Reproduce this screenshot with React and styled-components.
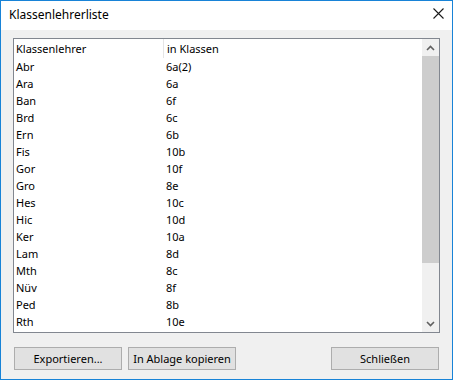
import styled, { createGlobalStyle } from 'styled-components'

const rows = [
    ['Abr', '6a(2)'], ['Ara', '6a'], ['Ban', '6f'], ['Brd', '6c'],
    ['Ern', '6b'], ['Fis', '10b'], ['Gor', '10f'], ['Gro', '8e'],
    ['Hes', '10c'], ['Hic', '10d'], ['Ker', '10a'], ['Lam', '8d'],
    ['Mth', '8c'], ['Nüv', '8f'], ['Ped', '8b'], ['Rth', '10e'],
];

export default function App () {
    return(
        <>
            <Global/>
            <Window>
                <TitleBar>
                    <Title>Klassenlehrerliste</Title>
                    <CloseButton aria-label="close">
                        <svg width="11" height="11" viewBox="0 0 11 11">
                            <path d="M0.5 0.5 L10.5 10.5 M10.5 0.5 L0.5 10.5" stroke="#1a1a1a" strokeWidth="1.1"/>
                        </svg>
                    </CloseButton>
                </TitleBar>
                <Body>
                    <ListBox>
                        <Table>
                            <HeaderRow>
                                <HeadCell>Klassenlehrer</HeadCell>
                                <HeadCell divider>in Klassen</HeadCell>
                            </HeaderRow>
                            {rows.map(r =>
                                <Row key={r[0]}>
                                    <Cell>{r[0]}</Cell>
                                    <Cell second>{r[1]}</Cell>
                                </Row>
                            )}
                        </Table>
                        <ScrollBar>
                            <Arrow>
                                <svg width="9" height="6" viewBox="0 0 9 6">
                                    <path d="M1 5 L4.5 1.5 L8 5" fill="none" stroke="#606060" strokeWidth="1.6"/>
                                </svg>
                            </Arrow>
                            <Track>
                                <Thumb/>
                            </Track>
                            <Arrow>
                                <svg width="9" height="6" viewBox="0 0 9 6">
                                    <path d="M1 1 L4.5 4.5 L8 1" fill="none" stroke="#606060" strokeWidth="1.6"/>
                                </svg>
                            </Arrow>
                        </ScrollBar>
                    </ListBox>
                    <ButtonRow>
                        <Button>Exportieren...</Button>
                        <Button>In Ablage kopieren</Button>
                        <Spacer/>
                        <Button>Schließen</Button>
                    </ButtonRow>
                </Body>
            </Window>
        </>
    )
};

//styles______________________________________________
const Global = createGlobalStyle`
    body {
        margin: 0;
        background: #ffffff;
        font-family: "Noto Sans", "Open Sans", sans-serif;
        font-size: 11px;
        color: #000;
    }
`;
const Window = styled.div`
    width: 453px;
    height: 380px;
    box-sizing: border-box;
    border: 1px solid #1883d7;
    background: #f0f0f0;
    display: flex;
    flex-direction: column;
`;
const TitleBar = styled.div`
    height: 29px;
    background: #ffffff;
    display: flex;
    align-items: center;
    justify-content: space-between;
    padding: 0 8px 0 8px;
`;
const Title = styled.div`
    font-size: 12px;
    margin-top: -2px;
`;
const CloseButton = styled.div`
    display: flex;
    margin-top: -4px;
    margin-right: 0px;
`;
const Body = styled.div`
    flex: 1;
    padding: 8px 12px 0 12px;
    display: flex;
    flex-direction: column;
`;
const ListBox = styled.div`
    height: 295px;
    box-sizing: border-box;
    border: 1px solid #828790;
    background: #ffffff;
    display: flex;
`;
const Table = styled.div`
    flex: 1;
    overflow: hidden;
`;
const HeaderRow = styled.div`
    height: 19px;
    display: grid;
    grid-template-columns: 149px 1fr;
    align-items: center;
`;
const HeadCell = styled.div`
    height: 100%;
    display: flex;
    align-items: center;
    padding-left: ${p => p.divider ? '3px' : '2px'};
    border-left: ${p => p.divider ? '1px solid #e5e5e5' : 'none'};
`;
const Row = styled.div`
    height: 17px;
    display: grid;
    grid-template-columns: 149px 1fr;
    align-items: center;
`;
const Cell = styled.div`
    padding-left: ${p => p.second ? '3px' : '2px'};
`;
const ScrollBar = styled.div`
    width: 17px;
    background: #f0f0f0;
    display: flex;
    flex-direction: column;
`;
const Arrow = styled.div`
    height: 17px;
    display: flex;
    align-items: center;
    justify-content: center;
`;
const Track = styled.div`
    flex: 1;
`;
const Thumb = styled.div`
    height: 207px;
    background: #cdcdcd;
`;
const ButtonRow = styled.div`
    display: flex;
    gap: 6px;
    margin-top: 14px;
    padding: 0 1px;
`;
const Spacer = styled.div`
    flex: 1;
`;
const Button = styled.div`
    width: 108px;
    height: 23px;
    box-sizing: border-box;
    border: 1px solid #adadad;
    background: #e1e1e1;
    display: flex;
    align-items: center;
    justify-content: center;
    font-size: 11px;
`;
